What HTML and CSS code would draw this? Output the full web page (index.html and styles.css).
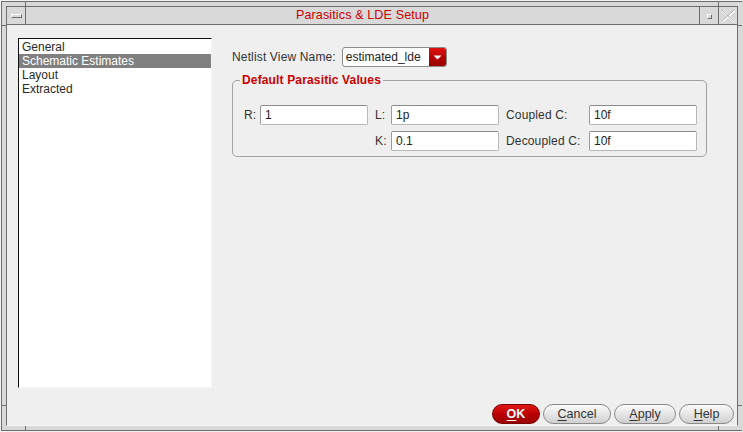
FILE: index.html
```html
<!DOCTYPE html>
<html>
<head>
<meta charset="utf-8">
<title>Parasitics &amp; LDE Setup</title>
<link rel="stylesheet" href="styles.css">
</head>
<body>
<div class="window">
  <div class="frame">
    <span class="grip grip-tl-v"></span>
    <span class="grip grip-tr-v"></span>
    <span class="grip grip-tl-h"></span>
    <span class="grip grip-bl-h"></span>
    <span class="grip grip-tr-h"></span>
    <span class="grip grip-br-h"></span>
    <span class="grip grip-bl-v"></span>
    <span class="grip grip-br-v"></span>
    <div class="inner">
      <div class="titlebar">
        <div class="tb-btn tb-menu"><span class="menu-icon"></span></div>
        <div class="tb-title">Parasitics &amp; LDE Setup</div>
        <div class="tb-btn tb-max"><span class="max-icon"></span></div>
        <div class="tb-btn tb-close">
          <svg width="15" height="14" viewBox="0 0 15 14">
            <path d="M1.5 1.5 L13.5 12.5 M13.5 1.5 L1.5 12.5" stroke="#ffffff" stroke-width="2" fill="none"/>
            <path d="M1 1 L13 12 M13 1 L1 12" stroke="#a8a8a8" stroke-width="1" fill="none"/>
          </svg>
        </div>
      </div>
      <div class="content">
        <div class="main">
          <div class="list">
            <div class="item">General</div>
            <div class="item selected">Schematic Estimates</div>
            <div class="item">Layout</div>
            <div class="item">Extracted</div>
          </div>
          <div class="panel">
            <div class="netlist-row">
              <span class="label">Netlist View Name:</span>
              <div class="combo">
                <span class="combo-text">estimated_lde</span>
                <span class="combo-arrow">
                  <svg width="9" height="5" viewBox="0 0 9 5"><path d="M0.5 0.5 L8.5 0.5 L4.5 4.5 Z" fill="#ffffff"/></svg>
                </span>
              </div>
            </div>
            <fieldset class="group">
              <legend class="group-title">Default Parasitic Values</legend>
              <div class="grid">
                <span class="label">R:</span>
                <div class="field">1</div>
                <span class="label lcol">L:</span>
                <div class="field">1p</div>
                <span class="label ccol">Coupled C:</span>
                <div class="field">10f</div>

                <span></span>
                <span></span>
                <span class="label lcol">K:</span>
                <div class="field">0.1</div>
                <span class="label ccol">Decoupled C:</span>
                <div class="field">10f</div>
              </div>
            </fieldset>
          </div>
        </div>
        <div class="buttons">
          <button class="btn btn-ok"><u>O</u>K</button>
          <button class="btn btn-cancel"><u>C</u>ancel</button>
          <button class="btn btn-apply"><u>A</u>pply</button>
          <button class="btn btn-help"><u>H</u>elp</button>
        </div>
      </div>
    </div>
  </div>
</div>
</body>
</html>
```
FILE: styles.css
```css
html, body {
  margin: 0;
  padding: 0;
  background: #d9d9d9;
}

body {
  font-family: "Liberation Sans", Arial, sans-serif;
  font-size: 12px;
  color: #2a2a2a;
}

.window {
  width: 743px;
  height: 432px;
  box-sizing: border-box;
  background: #d9d9d9;
  border: 1px solid;
  border-color: #f2f2f2 #d9d9d9 #f2f2f2 #f2f2f2;
}

.frame {
  position: relative;
  height: 100%;
  box-sizing: border-box;
  border-top: 1px solid #6e6e6e;
  border-left: 1px solid #6e6e6e;
  border-bottom: 1px solid #6e6e6e;
  padding: 4px 4px 4px 4px;
  display: flex;
}

/* resize-grip separators in the window frame */
.grip {
  position: absolute;
  background: #6e6e6e;
}
.grip-tl-v { left: 23px; top: -1px; width: 1px; height: 5px; }
.grip-tr-v { left: 716px; top: -1px; width: 1px; height: 5px; }
.grip-tl-h { left: -1px; top: 23px; width: 5px; height: 1px; }
.grip-bl-h { left: -1px; top: 403px; width: 5px; height: 1px; }
.grip-tr-h { right: 0; top: 23px; width: 4px; height: 1px; }
.grip-br-h { right: 0; top: 403px; width: 4px; height: 1px; }
.grip-bl-v { left: 23px; bottom: -1px; width: 1px; height: 5px; }
.grip-br-v { left: 716px; bottom: -1px; width: 1px; height: 5px; }

.inner {
  flex: 1;
  display: flex;
  flex-direction: column;
  border-top: 1px solid #6e6e6e;
  border-left: 1px solid #6e6e6e;
  border-right: 1px solid #6e6e6e;
  border-bottom: 1px solid #fafafa;
  background: #efefef;
}

.titlebar {
  height: 17px;
  flex: none;
  display: flex;
  background: #d9d9d9;
  border-bottom: 1px solid #6e6e6e;
}

.tb-btn {
  width: 18px;
  flex: none;
  display: flex;
  align-items: center;
  justify-content: center;
}
.tb-menu { border-right: 1px solid #6e6e6e; }
.tb-max { border-left: 1px solid #6e6e6e; }
.tb-close { border-left: 1px solid #6e6e6e; }

.menu-icon {
  width: 9px;
  height: 2px;
  border-top: 1px solid #ffffff;
  border-left: 1px solid #ffffff;
  border-right: 1px solid #6e6e6e;
  border-bottom: 1px solid #6e6e6e;
  background: #d9d9d9;
}

.max-icon {
  width: 3px;
  height: 3px;
  border-top: 1px solid #ffffff;
  border-left: 1px solid #ffffff;
  border-right: 1px solid #6e6e6e;
  border-bottom: 1px solid #6e6e6e;
  margin-top: 2px;
}

.tb-title {
  flex: 1;
  text-align: center;
  color: #cc0000;
  font-size: 12.6px;
  line-height: 17px;
  letter-spacing: 0.1px;
}

.content {
  flex: 1;
  display: flex;
  flex-direction: column;
  min-height: 0;
}

.main {
  flex: 1;
  display: flex;
  padding: 13px 0 0 11px;
  min-height: 0;
}

.list {
  width: 192px;
  height: 347px;
  flex: none;
  background: #ffffff;
  border-top: 1px solid #111111;
  border-left: 1px solid #111111;
  border-right: 1px solid #f6f6f6;
  border-bottom: 1px solid #f6f6f6;
  padding-top: 1px;
}

.item {
  height: 14px;
  line-height: 14px;
  padding-left: 3px;
  color: #2a2a2a;
}
.item.selected {
  background: #808080;
  color: #ffffff;
}

.panel {
  margin-left: 20px;
  width: 475px;
  padding-top: 9px;
}

.netlist-row {
  display: flex;
  align-items: center;
  height: 20px;
}

.label {
  color: #333333;
  white-space: nowrap;
  letter-spacing: 0.15px;
}

.combo {
  margin-left: 6px;
  width: 105px;
  height: 20px;
  box-sizing: border-box;
  display: flex;
  border: 1px solid #8c8c8c;
  border-radius: 3px;
  background: #ffffff;
  overflow: hidden;
}
.combo-text {
  flex: 1;
  padding-left: 3px;
  line-height: 18px;
  color: #222222;
}
.combo-arrow {
  width: 17px;
  display: flex;
  align-items: center;
  justify-content: center;
  background: linear-gradient(#e01010, #b00000 60%, #9a0000);
}

.group {
  margin: 6px 0 0 0;
  padding: 18px 8px 5px 11px;
  border: 1px solid #a2a2a2;
  border-radius: 5px;
  width: 454px;
}

.group-title {
  color: #cc0000;
  font-weight: bold;
  font-size: 12px;
  letter-spacing: 0.15px;
  padding: 0 2px;
  margin-left: -4px;
}

.grid {
  display: grid;
  grid-template-columns: 16px 108px 23px 108px 90px 108px;
  grid-auto-rows: 20px;
  row-gap: 6px;
  align-items: center;
}

.lcol { padding-left: 7px; }
.ccol { padding-left: 7px; }

.field {
  height: 20px;
  box-sizing: border-box;
  background: #ffffff;
  border: 1px solid #b8b8b8;
  border-top-color: #8a8a8a;
  border-left-color: #9a9a9a;
  border-radius: 2px;
  padding-left: 4px;
  line-height: 18px;
  color: #222222;
}

.buttons {
  flex: none;
  display: flex;
  justify-content: flex-end;
  gap: 3px;
  padding: 0 3px 1px 0;
}

.btn {
  height: 20px;
  box-sizing: border-box;
  border: 1px solid #8a8a8a;
  border-radius: 10px;
  background: linear-gradient(#fafafa, #e6e6e6 50%, #cfcfcf);
  font-family: "Liberation Sans", Arial, sans-serif;
  font-size: 12.5px;
  color: #333333;
  padding: 0;
  line-height: 18px;
}
.btn u { text-underline-offset: 2px; }
.btn-ok {
  width: 48px;
  background: linear-gradient(#e01818, #bb0000 50%, #990000);
  border-color: #7a0000;
  color: #ffffff;
  font-weight: bold;
}
.btn-cancel { width: 68px; }
.btn-apply { width: 62px; }
.btn-help { width: 55px; }
```
